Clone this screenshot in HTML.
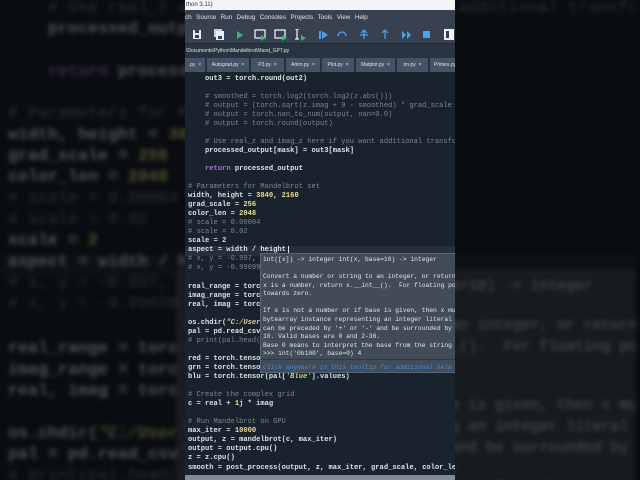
<!DOCTYPE html>
<html><head><meta charset="utf-8"><style>
*{margin:0;padding:0;box-sizing:border-box}
html,body{width:640px;height:480px;overflow:hidden;background:#0a0c0f}
.bgwrap{position:absolute;left:0;top:0;width:640px;height:480px;overflow:hidden}
.bgscale{position:absolute;left:0;top:0;width:640px;height:480px;transform-origin:0 0;transform:scale(2.35) translate(-184.6px,-137.9px);filter:blur(1px) brightness(0.35)}
.ed{position:absolute;left:185px;top:72px;width:270px;height:408px;overflow:hidden;background:#19232d}
.code{position:absolute;left:3px;top:2.5px;font-family:"Liberation Mono",monospace;font-size:7.1px;line-height:9.04px;color:#dde2e8;white-space:pre;font-weight:bold}
.c{color:#7d8690;font-weight:normal}
.n{color:#eadf8c}
.k{color:#b46fd8}
.s{color:#d8cf8c;font-style:italic}
.hl{position:absolute;left:0;top:174px;width:270px;height:9.5px;background:#25303c}
.tip{position:absolute;left:75px;top:181px;width:260px;height:120px;background:#414c58;border:1px solid #5a6572;font-family:"Liberation Mono",monospace;font-size:6.3px;color:#e2e6ea;white-space:pre}
.tip div{position:absolute;left:2px}
.tip .sep{left:0;width:100%;height:1px;background:#2f3844}
.tip .lk{color:#3f8ee6;font-style:italic}
.cur{position:absolute;left:103px;top:174px;width:1px;height:9px;background:#e0e0e0}
.main{position:absolute;left:185px;top:0;width:270px;height:480px;overflow:hidden;background:#19232d}
.title{position:absolute;left:0;top:0;width:270px;height:10px;background:#f4f5f6;font-family:"Liberation Sans",sans-serif;font-size:6px;color:#333;padding:2px 0 0 1px}
.menu{position:absolute;left:0;top:10px;width:270px;height:15px;background:#37414f;font-family:"Liberation Sans",sans-serif;font-size:6.3px;color:#dfe4ea;padding:4px 0 0 0;white-space:pre;word-spacing:0.5px}
.tb{position:absolute;left:0;top:25px;width:270px;height:18px;background:#37414f}
.path{position:absolute;left:0;top:43px;width:270px;height:13px;background:#2a3440;font-family:"Liberation Sans",sans-serif;font-size:5px;color:#dfe4ea;padding:3.5px 0 0 1px;border-top:1px solid #222a33}
.tabs{position:absolute;left:0;top:56px;width:270px;height:16px;background:#2a3440}
.tab{position:absolute;top:2px;height:14px;background:#455364;font-family:"Liberation Sans",sans-serif;font-size:5px;color:#dfe4ea;padding-top:4px;text-align:center;white-space:pre}
.ic{position:absolute;top:29px}
.bot{position:absolute;left:0;top:475px;width:270px;height:5px;background:#7f8b98}
</style></head><body>

<div class="bgwrap"><div class="bgscale">
<div class="ed">
<div class="hl"></div>
<div class="code">    out3 = torch.round(out2)

<span class="c">    # smoothed = torch.log2(torch.log2(z.abs()))</span>
<span class="c">    # output = (torch.sqrt(z.imag + 9 - smoothed) * grad_scale</span>
<span class="c">    # output = torch.nan_to_num(output, nan=0.0)</span>
<span class="c">    # output = torch.round(output)</span>

<span class="c">    # Use real_z and imag_z here if you want additional transformations</span>
    processed_output[mask] = out3[mask]

    <span class="k">return</span> processed_output

<span class="c"># Parameters for Mandelbrot set</span>
width, height = <span class="n">3840</span>, <span class="n">2160</span>
grad_scale = <span class="n">256</span>
color_len = <span class="n">2048</span>
<span class="c"># scale = 0.00004</span>
<span class="c"># scale = 0.02</span>
scale = <span class="n">2</span>
aspect = width / height
<span class="c"># x, y = -0.997, 0.2</span>
<span class="c"># x, y = -0.99699, 0.2</span>

real_range = torch.linspace(x - scale, x + scale, width)
imag_range = torch.linspace(y - scale, y + scale, height)
real, imag = torch.meshgrid(real_range, imag_range)

os.chdir(<span class="s">"C:/Users/Documents/Python"</span>)
pal = pd.read_csv(<span class="s">"palette.csv"</span>)
<span class="c"># print(pal.head())</span>

red = torch.tensor(pal[<span class="s">'Red'</span>].values)
grn = torch.tensor(pal[<span class="s">'Green'</span>].values)
blu = torch.tensor(pal[<span class="s">'Blue'</span>].values)

<span class="c"># Create the complex grid</span>
c = real + <span class="n">1j</span> * imag

<span class="c"># Run Mandelbrot on GPU</span>
max_iter = <span class="n">10000</span>
output, z = mandelbrot(c, max_iter)
output = output.cpu()
z = z.cpu()
smooth = post_process(output, z, max_iter, grad_scale, color_len)</div>
<div class="tip">
<div style="top:2px">int([x]) -&gt; integer int(x, base=10) -&gt; integer</div>
<div style="top:19px">Convert a number or string to an integer, or return 0 if no arguments</div>
<div style="top:27.5px">x is a number, return x.__int__().  For floating point numbers, this</div>
<div style="top:36px">towards zero.</div>
<div style="top:53px">If x is not a number or if base is given, then x must be a string,</div>
<div style="top:62px">bytearray instance representing an integer literal in the given base</div>
<div style="top:70.5px">can be preceded by '+' or '-' and be surrounded by whitespace.</div>
<div style="top:79px">10. Valid bases are 0 and 2-36.</div>
<div style="top:87.5px">Base 0 means to interpret the base from the string as an integer</div>
<div style="top:96px">&gt;&gt;&gt; int('0b100', base=0) 4</div>
<div class="sep" style="top:105px"></div>
<div class="lk" style="top:110px">Click anywhere in this tooltip for additional help</div>
</div>
</div>
</div></div>

<div class="main">
<div class="title">thon 3.11)</div>
<div class="menu">ch  Source  Run  Debug  Consoles  Projects  Tools  View  Help</div>
<div class="tb"></div>
<svg class="ic" style="left:0" width="270" height="12" viewBox="0 0 270 12">
<rect x="8" y="1" width="8" height="9" fill="#e8ecf0"/><rect x="10" y="1" width="4" height="3" fill="#37414f"/><rect x="10" y="6" width="4" height="3" fill="#37414f"/>
<rect x="29" y="0" width="8" height="8" fill="#c9ced4"/><rect x="31" y="2" width="8" height="9" fill="#e8ecf0"/><rect x="33" y="7" width="4" height="3" fill="#37414f"/>
<path d="M52 2 L58 6 L52 10Z" fill="#2ebd6b"/>
<rect x="70" y="1" width="10" height="8" fill="none" stroke="#e8ecf0" stroke-width="1.3"/><path d="M76 6 L81 9 L76 12Z" fill="#2ebd6b"/>
<rect x="90" y="1" width="10" height="8" fill="none" stroke="#e8ecf0" stroke-width="1.3"/><path d="M97 6 L102 9 L97 12Z" fill="#2ebd6b"/>
<path d="M112 0 L112 10 M110 0 L114 0 M110 10 L114 10" stroke="#e8ecf0" stroke-width="1.3"/><path d="M116 6 L121 9 L116 12Z" fill="#2ebd6b"/>
<rect x="134" y="2" width="2" height="8" fill="#4aa3f0"/><path d="M137 2 L143 6 L137 10Z" fill="#4aa3f0"/>
<path d="M153 7 A4 4 0 0 1 161 7" fill="none" stroke="#4aa3f0" stroke-width="1.3"/>
<path d="M179 1 L179 10 M176 4 L179 1 L182 4 M175 6 L183 6" stroke="#4aa3f0" stroke-width="1.2" fill="none"/>
<path d="M200 10 L200 1 M197 4 L200 1 L203 4" stroke="#4aa3f0" stroke-width="1.2" fill="none"/>
<path d="M217 2 L221 6 L217 10Z M222 2 L226 6 L222 10Z" fill="#4aa3f0"/>
<rect x="238" y="2" width="7" height="7" fill="#4aa3f0"/>
<rect x="259" y="0" width="10" height="11" fill="#f0f2f4"/><rect x="261" y="2" width="3" height="7" fill="#37414f"/>
</svg>
<div class="path">\Documents\Python\Mandelbrot\Mand_GPT.py</div>
<div class="tabs">
<div class="tab" style="left:0;width:20px">.py  ×</div>
<div class="tab" style="left:22px;width:42px">Autograd.py  ×</div>
<div class="tab" style="left:66px;width:33px">P3.py  ×</div>
<div class="tab" style="left:101px;width:34px">Anim.py  ×</div>
<div class="tab" style="left:137px;width:32px">Plot.py  ×</div>
<div class="tab" style="left:171px;width:39px">Matplot.py  ×</div>
<div class="tab" style="left:212px;width:31px">nn.py  ×</div>
<div class="tab" style="left:245px;width:30px">Primes.py</div>
</div>
<div class="ed" style="left:0">
<div class="hl"></div>
<div class="code">    out3 = torch.round(out2)

<span class="c">    # smoothed = torch.log2(torch.log2(z.abs()))</span>
<span class="c">    # output = (torch.sqrt(z.imag + 9 - smoothed) * grad_scale</span>
<span class="c">    # output = torch.nan_to_num(output, nan=0.0)</span>
<span class="c">    # output = torch.round(output)</span>

<span class="c">    # Use real_z and imag_z here if you want additional transformations</span>
    processed_output[mask] = out3[mask]

    <span class="k">return</span> processed_output

<span class="c"># Parameters for Mandelbrot set</span>
width, height = <span class="n">3840</span>, <span class="n">2160</span>
grad_scale = <span class="n">256</span>
color_len = <span class="n">2048</span>
<span class="c"># scale = 0.00004</span>
<span class="c"># scale = 0.02</span>
scale = <span class="n">2</span>
aspect = width / height
<span class="c"># x, y = -0.997, 0.2</span>
<span class="c"># x, y = -0.99699, 0.2</span>

real_range = torch.linspace(x - scale, x + scale, width)
imag_range = torch.linspace(y - scale, y + scale, height)
real, imag = torch.meshgrid(real_range, imag_range)

os.chdir(<span class="s">"C:/Users/Documents/Python"</span>)
pal = pd.read_csv(<span class="s">"palette.csv"</span>)
<span class="c"># print(pal.head())</span>

red = torch.tensor(pal[<span class="s">'Red'</span>].values)
grn = torch.tensor(pal[<span class="s">'Green'</span>].values)
blu = torch.tensor(pal[<span class="s">'Blue'</span>].values)

<span class="c"># Create the complex grid</span>
c = real + <span class="n">1j</span> * imag

<span class="c"># Run Mandelbrot on GPU</span>
max_iter = <span class="n">10000</span>
output, z = mandelbrot(c, max_iter)
output = output.cpu()
z = z.cpu()
smooth = post_process(output, z, max_iter, grad_scale, color_len)</div>
<div class="cur"></div>
<div class="tip">
<div style="top:2px">int([x]) -&gt; integer int(x, base=10) -&gt; integer</div>
<div style="top:19px">Convert a number or string to an integer, or return 0 if no arguments</div>
<div style="top:27.5px">x is a number, return x.__int__().  For floating point numbers, this</div>
<div style="top:36px">towards zero.</div>
<div style="top:53px">If x is not a number or if base is given, then x must be a string,</div>
<div style="top:62px">bytearray instance representing an integer literal in the given base</div>
<div style="top:70.5px">can be preceded by '+' or '-' and be surrounded by whitespace.</div>
<div style="top:79px">10. Valid bases are 0 and 2-36.</div>
<div style="top:87.5px">Base 0 means to interpret the base from the string as an integer</div>
<div style="top:96px">&gt;&gt;&gt; int('0b100', base=0) 4</div>
<div class="sep" style="top:105px"></div>
<div class="lk" style="top:110px">Click anywhere in this tooltip for additional help</div>
</div>
</div>
<div class="bot"></div>
</div>
</body></html>
